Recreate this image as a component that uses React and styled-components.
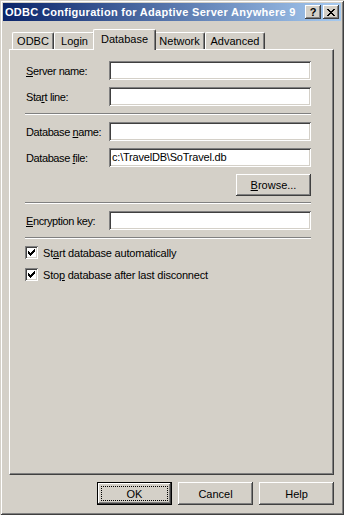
import styled, { createGlobalStyle } from "styled-components";

const GlobalStyle = createGlobalStyle`
  html, body {
    margin: 0;
    padding: 0;
    background: #d4d0c8;
  }
  * {
    box-sizing: border-box;
  }
`;

const Window = styled.div`
  width: 344px;
  height: 515px;
  padding: 3px;
  display: flex;
  flex-direction: column;
  background: #d4d0c8;
  font-family: "Liberation Sans", Arial, sans-serif;
  font-size: 11px;
  color: #000;
  box-shadow: inset 1px 1px #d4d0c8, inset -1px -1px #404040,
    inset 2px 2px #ffffff, inset -2px -2px #808080;
`;

const TitleBar = styled.div`
  height: 18px;
  display: flex;
  align-items: center;
  padding: 0 2px 0 2px;
  background: linear-gradient(to right, #0a246a, #a6caf0);
  color: #fff;
  font-weight: bold;
  font-size: 11px;
  letter-spacing: 0.3px;
`;

const TitleText = styled.span`
  flex: 1;
  white-space: nowrap;
  overflow: hidden;
`;

const CaptionButton = styled.div`
  width: 16px;
  height: 14px;
  margin-left: ${(p) => (p.$gap ? "2px" : "0")};
  display: flex;
  align-items: center;
  justify-content: center;
  background: #d4d0c8;
  color: #000;
  font-size: 11px;
  font-weight: bold;
  letter-spacing: 0;
  box-shadow: inset -1px -1px #404040, inset 1px 1px #ffffff,
    inset -2px -2px #808080;
`;

const Body = styled.div`
  flex: 1;
  display: flex;
  flex-direction: column;
  padding: 8px 7px 0 6px;
`;

const TabStrip = styled.div`
  display: flex;
  align-items: flex-end;
  height: 20px;
  padding-left: 3px;
  position: relative;
  z-index: 1;
`;

const Tab = styled.div`
  width: ${(p) => p.$w + (p.$active ? 4 : 0)}px;
  height: ${(p) => (p.$active ? 21 : 17)}px;
  margin: ${(p) => (p.$active ? "0 -2px -1px -2px" : "0")};
  display: flex;
  align-items: center;
  justify-content: center;
  padding-bottom: ${(p) => (p.$active ? 3 : 0)}px;
  background: #d4d0c8;
  border-radius: 2px 2px 0 0;
  border-top: 1px solid #fff;
  border-left: 1px solid #fff;
  border-right: 1px solid #404040;
  box-shadow: inset -1px 0 #808080;
  position: relative;
  z-index: ${(p) => (p.$active ? 2 : 0)};
  white-space: nowrap;
`;

const Panel = styled.div`
  flex: 0 0 426px;
  display: flex;
  flex-direction: column;
  gap: 7px;
  padding: 11px 22px 0 15px;
  letter-spacing: -0.2px;
  border-top: 1px solid #fff;
  border-left: 1px solid #fff;
  border-right: 1px solid #404040;
  border-bottom: 1px solid #404040;
  box-shadow: inset -1px -1px #808080;
`;

const Row = styled.div`
  display: flex;
  align-items: center;
  height: 19px;
`;

const Label = styled.label`
  width: 84px;
  padding-left: 1px;
  letter-spacing: -0.4px;
  white-space: nowrap;
`;

const Field = styled.div`
  flex: 1;
  height: 19px;
  background: #fff;
  padding: 3px 0 0 3px;
  white-space: nowrap;
  box-shadow: inset 1px 1px #808080, inset -1px -1px #ffffff,
    inset 2px 2px #404040, inset -2px -2px #d4d0c8;
`;

const Separator = styled.div`
  height: 2px;
  border-top: 1px solid #808080;
  border-bottom: 1px solid #fff;
`;

const ButtonRow = styled.div`
  display: flex;
  justify-content: flex-end;
  margin-bottom: -1px;
`;

const Button = styled.div`
  width: 75px;
  height: ${(p) => p.$h || 23}px;
  display: flex;
  align-items: center;
  justify-content: center;
  background: #d4d0c8;
  position: relative;
  letter-spacing: 0;
  box-shadow: ${(p) =>
    p.$default
      ? "inset 0 0 0 1px #000, inset -2px -2px #404040, inset 2px 2px #fff, inset -3px -3px #808080"
      : "inset -1px -1px #404040, inset 1px 1px #fff, inset -2px -2px #808080"};
`;

const FocusRing = styled.div`
  position: absolute;
  inset: 4px;
  border: 1px dotted #000;
`;

const CheckList = styled.div`
  display: flex;
  flex-direction: column;
  gap: 9px;
`;

const CheckRow = styled.div`
  display: flex;
  align-items: center;
  height: 13px;
  gap: 5px;
  white-space: nowrap;
`;

const Box = styled.div`
  width: 13px;
  height: 13px;
  background: #fff;
  display: flex;
  align-items: center;
  justify-content: center;
  box-shadow: inset 1px 1px #808080, inset -1px -1px #ffffff,
    inset 2px 2px #404040, inset -2px -2px #d4d0c8;
`;

const Spacer = styled.div`
  flex: 1;
`;

const Footer = styled.div`
  display: flex;
  justify-content: flex-end;
  gap: 6px;
  padding: 7px 0 0 0;
`;

const Key = styled.u`
  text-decoration: underline;
`;

const Check = () => (
  <svg width="7" height="7" viewBox="0 0 7 7">
    <path
      d="M0 2h1v1h1v1h1V3h1V2h1V1h1V0h1v3H6v1H5v1H4v1H3v1H2V6H1V5H0z"
      fill="#000"
    />
  </svg>
);

const CloseIcon = () => (
  <svg width="8" height="7" viewBox="0 0 8 7">
    <path
      d="M0 0h2v1h1v1h2V1h1V0h2v1H7v1H6v1H5v1h1v1h1v1h1v1H6V6H5V5H3v1H2v1H0V6h1V5h1V4h1V3H2V2H1V1H0z"
      fill="#000"
    />
  </svg>
);

const tabs = [
  { name: "ODBC", w: 42 },
  { name: "Login", w: 41 },
  { name: "Database", w: 59, active: true },
  { name: "Network", w: 51 },
  { name: "Advanced", w: 60 },
];

const App = () => {
  return (
    <>
      <GlobalStyle />
      <Window>
        <TitleBar>
          <TitleText>ODBC Configuration for Adaptive Server Anywhere 9</TitleText>
          <CaptionButton>?</CaptionButton>
          <CaptionButton $gap>
            <CloseIcon />
          </CaptionButton>
        </TitleBar>
        <Body>
          <TabStrip>
            {tabs.map((t) => (
              <Tab key={t.name} $w={t.w} $active={t.active}>
                {t.name}
              </Tab>
            ))}
          </TabStrip>
          <Panel>
            <Row>
              <Label>
                <Key>S</Key>erver name:
              </Label>
              <Field />
            </Row>
            <Row>
              <Label>
                Sta<Key>r</Key>t line:
              </Label>
              <Field />
            </Row>
            <Separator />
            <Row>
              <Label>
                Database <Key>n</Key>ame:
              </Label>
              <Field />
            </Row>
            <Row>
              <Label>
                Database <Key>f</Key>ile:
              </Label>
              <Field>c:\TravelDB\SoTravel.db</Field>
            </Row>
            <ButtonRow>
              <Button $h={22}>
                <span>
                  <Key>B</Key>rowse...
                </span>
              </Button>
            </ButtonRow>
            <Separator />
            <Row>
              <Label>
                <Key>E</Key>ncryption key:
              </Label>
              <Field />
            </Row>
            <Separator />
            <CheckList>
              <CheckRow>
                <Box>
                  <Check />
                </Box>
                <span>
                  St<Key>a</Key>rt database automatically
                </span>
              </CheckRow>
              <CheckRow>
                <Box>
                  <Check />
                </Box>
                <span>
                  Sto<Key>p</Key> database after last disconnect
                </span>
              </CheckRow>
            </CheckList>
            <Spacer />
          </Panel>
          <Footer>
            <Button $default>
              <FocusRing />
              OK
            </Button>
            <Button>Cancel</Button>
            <Button>Help</Button>
          </Footer>
        </Body>
      </Window>
    </>
  );
};

export default App;
